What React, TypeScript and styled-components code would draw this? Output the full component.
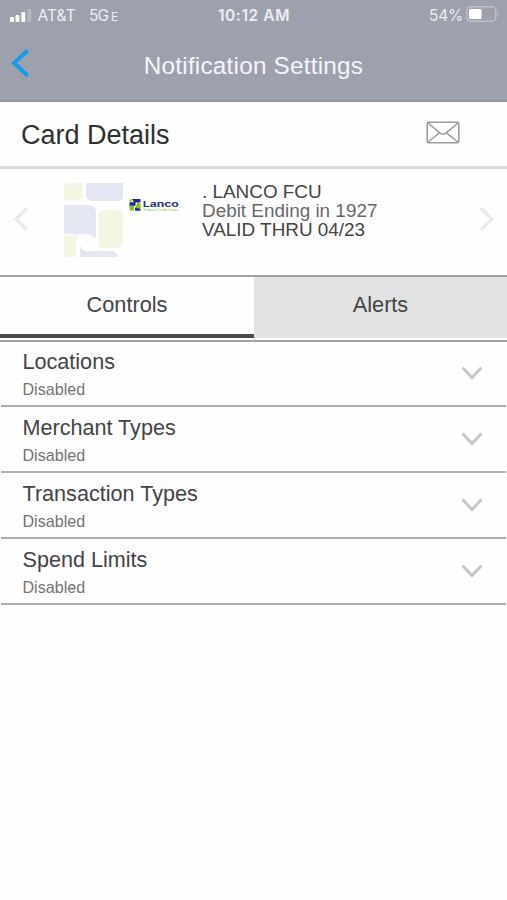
import React from "react";
import styled, { createGlobalStyle } from "styled-components";

const GlobalStyle = createGlobalStyle`
  * { box-sizing: border-box; }
  body { margin: 0; background: #fefefe; }
`;

const Screen = styled.div`
  width: 507px;
  height: 900px;
  overflow: hidden;
  background: #fefefe;
  color: #444;
  font-family: "Liberation Sans", Arial, sans-serif;
  white-space: nowrap;
`;

const Top = styled.header`
  height: 102px;
  background: #9da1ad;
  border-bottom: 2px solid #9494a0;
  color: #f4f5fc;
`;

const StatusBar = styled.div`
  height: 30px;
  padding: 1px 8px 0 9px;
  display: grid;
  grid-template-columns: 1fr auto 1fr;
  align-items: center;
  font: 400 15.5px/29px Inter, sans-serif;
  color: #eceef5;
`;

const Carrier = styled.div`
  display: flex;
  align-items: center;
`;

const CarrierName = styled.span`
  margin-left: 5.5px;
  letter-spacing: 0.1px;
`;

const Network = styled.span`
  margin-left: 13px;
  letter-spacing: -0.7px;
  small { font-size: 12px; line-height: 1; margin-left: 2.5px; }
`;

const Clock = styled.div`
  font-weight: 600;
  font-size: 15.5px;
  letter-spacing: 0.6px;
`;

const Battery = styled.div`
  display: flex;
  align-items: center;
  justify-content: flex-end;
  gap: 3px;
  letter-spacing: -0.2px;
  svg { margin-top: -3px; }
`;

const NavBar = styled.div`
  height: 70px;
  padding: 0 11px;
  display: grid;
  grid-template-columns: 20px 1fr 20px;
  align-items: center;
`;

const BackIcon = styled.svg`
  width: 20px;
  height: 30px;
  margin-top: -6px;
`;

const NavTitle = styled.h1`
  margin: 0;
  padding-top: 1px;
  text-align: center;
  font-weight: 400;
  font-size: 24.3px;
  line-height: 70px;
  letter-spacing: 0.22px;
`;

const SectionHeader = styled.div`
  height: 67px;
  padding: 0 47px 0 21px;
  display: flex;
  align-items: center;
  justify-content: space-between;
  border-bottom: 3px solid #d7d7d7;
  color: #303030;
  h2 { margin: 0; padding-top: 2px; font-weight: 400; font-size: 27px; line-height: 62px; }
  svg { margin-top: -3px; }
`;

const CardPanel = styled.section`
  height: 106px;
  padding: 13px 11px 0 12px;
  display: flex;
  align-items: flex-start;
`;

const Arrow = styled.svg`
  width: 18px;
  height: 26px;
  margin-top: 24px;
  fill: none;
  stroke: #e9e9e9;
  stroke-width: 3.2;
`;

const CardArt = styled.svg`
  width: 124px;
  height: 78px;
  margin-left: 31px;
`;

const CardInfo = styled.div`
  flex: 1;
  margin-left: 17px;
  font-size: 18.9px;
  line-height: 19px;
`;

const CardLine = styled.div<{ $muted?: boolean }>`
  color: ${(p) => (p.$muted ? "#686868" : "#444")};
`;

const Tabs = styled.div`
  height: 67px;
  display: grid;
  grid-template-columns: 254px 1fr;
  border-top: 2px solid #a2a2a2;
  border-bottom: 2px solid #a2a2a2;
  padding-bottom: 2px;
`;

const Tab = styled.div<{ $active?: boolean }>`
  text-align: center;
  font-size: 21.7px;
  line-height: 56px;
  color: #444;
  background: ${(p) => (p.$active ? "#fefefe" : "#e3e3e3")};
  border-bottom: 4px solid ${(p) => (p.$active ? "#4c4c4c" : "#e3e3e3")};
`;

const Row = styled.div`
  height: 66px;
  margin: 0 1px;
  padding: 0 23px 0 21.5px;
  display: flex;
  align-items: center;
  justify-content: space-between;
  border-bottom: 2px solid #b0b0b0;
  &:first-child { height: 65px; }
  svg { margin-top: -1px; fill: none; stroke: #c6c6c6; stroke-width: 3; }
`;

const RowName = styled.div`
  padding-top: 3px;
  font-size: 21.6px;
  line-height: 26px;
`;

const RowState = styled.div`
  margin-top: 2px;
  font-size: 16.1px;
  line-height: 24px;
  color: #747474;
`;

const settings = ["Locations", "Merchant Types", "Transaction Types", "Spend Limits"];

export default function App() {
  return (
    <Screen>
      <GlobalStyle />
      <Top>
        <StatusBar>
          <Carrier>
            <svg width="23" height="14" viewBox="0 0 23 14" fill="#fff">
              <rect x="1" y="8" width="4" height="5" rx="1" />
              <rect x="6.5" y="6" width="4" height="7" rx="1" />
              <rect x="12.3" y="3" width="4" height="10" rx="1" />
              <rect x="18.3" y="0" width="4" height="13" rx="1" opacity=".25" />
            </svg>
            <CarrierName>AT&amp;T</CarrierName>
            <Network>5G<small>E</small></Network>
          </Carrier>
          <Clock>10:12 AM</Clock>
          <Battery>
            <span>54%</span>
            <svg width="33" height="16" viewBox="0 0 33 16">
              <rect x=".8" y=".8" width="29" height="14.4" rx="4" fill="none" stroke="#bfc1ca" strokeWidth="1.4" />
              <rect x="3" y="3" width="12.5" height="10" rx="1.5" fill="#fff" />
              <path d="M31.3 5.5c1.7.7 1.7 4.3 0 5z" fill="#bfc1ca" />
            </svg>
          </Battery>
        </StatusBar>
        <NavBar>
          <BackIcon viewBox="0 0 20 30">
            <path d="M16.7 2.5 3 15 16.7 27.7" fill="none" stroke="#179be8" strokeWidth="4" />
          </BackIcon>
          <NavTitle>Notification Settings</NavTitle>
        </NavBar>
      </Top>
      <SectionHeader>
        <h2>Card Details</h2>
        <svg width="34" height="23" viewBox="0 0 34 23" fill="none" stroke="#9a9a9a" strokeWidth="1.5">
          <rect x="1.2" y="1.2" width="31.6" height="20.6" rx="1.5" />
          <path d="m2 2 12.5 10.3q2.5 1.7 5 0L32 2M2 21l11.8-9.3M32 21l-11.8-9.3" />
        </svg>
      </SectionHeader>
      <CardPanel>
        <Arrow viewBox="0 0 18 26"><path d="M15 2 4 13 15 24" /></Arrow>
        <CardArt viewBox="0 0 124 78">
          <g fill="#f2f6e3">
            <path d="M8 1h13v13q0 4-4 4H3V6q0-5 5-5zM43 28h13q6 0 6 6v27q0 5-6 5H37q2-4 0-9V34q0-6 6-6zM3 53h15q-4 5-3 11v11H3z" />
          </g>
          <g fill="#e4e6f2">
            <path d="M25 1h37v13q0 5-6 5H32q-7 0-7-6zM3 23h24q8 0 8 8v25l-8-4H3zM19 63q4 6 12 6h18q7 0 8 6H19z" />
          </g>
          <circle cx="27" cy="61" r="8.5" fill="#fefefe" />
          <g fill="#80c41c">
            <path d="M68.5 17.5h2v2.3h-2zM76.5 20.5q3 0 3 2.5v4h-4.5v-3zM68.5 24h4.5v4.5h-4.5z" />
          </g>
          <g fill="#202d82">
            <path d="M71 17h8.5v3.5H73zM68.5 20.3h6v3.4h-6zM74 25.5l5.5 1.5v1.8H74z" />
          </g>
          <text x="81.8" y="24.5" textLength="36" lengthAdjust="spacingAndGlyphs" fontFamily="Inter, sans-serif" fontSize="7.6" fontWeight="700" fill="#28357e">Lanco</text>
          <text x="82.5" y="28.9" textLength="34.5" lengthAdjust="spacingAndGlyphs" fontFamily="Liberation Sans, sans-serif" fontSize="3.6" fill="#8fc43c">Federal Credit Union</text>
        </CardArt>
        <CardInfo>
          <CardLine>. LANCO FCU</CardLine>
          <CardLine $muted>Debit Ending in 1927</CardLine>
          <CardLine>VALID THRU 04/23</CardLine>
        </CardInfo>
        <Arrow viewBox="0 0 18 26"><path d="m3 2 11 11L3 24" /></Arrow>
      </CardPanel>
      <Tabs>
        <Tab $active>Controls</Tab>
        <Tab>Alerts</Tab>
      </Tabs>
      <main>
        {settings.map((name) => (
          <Row key={name}>
            <div>
              <RowName>{name}</RowName>
              <RowState>Disabled</RowState>
            </div>
            <svg width="22" height="14" viewBox="0 0 22 14"><path d="m1.5 1.5 9.5 10 9.5-10" /></svg>
          </Row>
        ))}
      </main>
    </Screen>
  );
}
